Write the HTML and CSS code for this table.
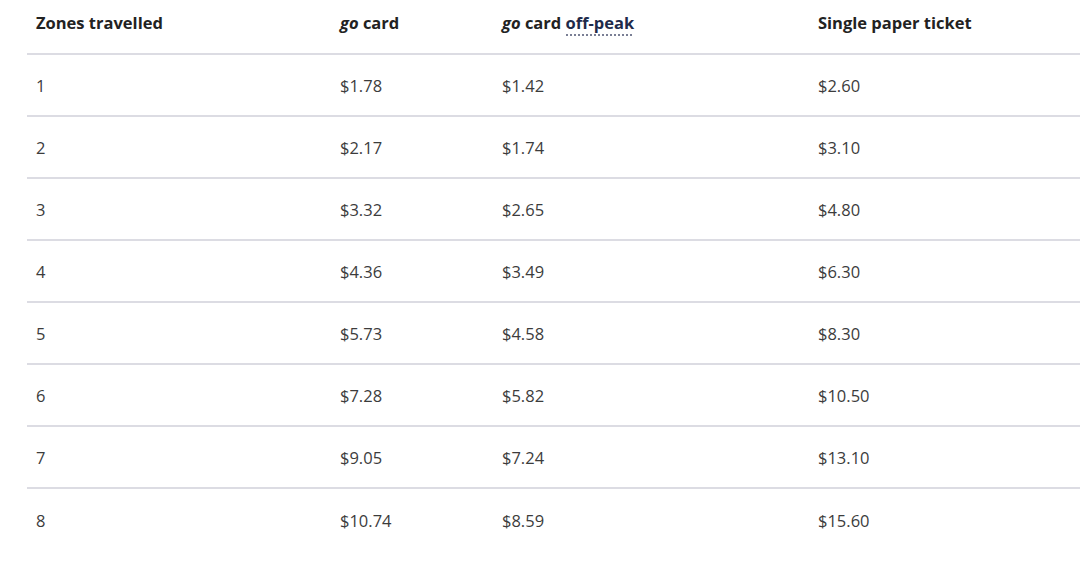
FILE: index.html
```html
<!DOCTYPE html>
<html lang="en">
<head>
<meta charset="utf-8">
<title>Fares</title>
<link rel="stylesheet" href="styles.css">
</head>
<body>
<table class="fares">
  <colgroup>
    <col class="c1"><col class="c2"><col class="c3"><col class="c4">
  </colgroup>
  <thead>
    <tr>
      <th>Zones travelled</th>
      <th><em>go</em> card</th>
      <th><em>go</em> card <abbr class="tip" title="off-peak">off-peak</abbr></th>
      <th>Single paper ticket</th>
    </tr>
  </thead>
  <tbody>
    <tr><td>1</td><td>$1.78</td><td>$1.42</td><td>$2.60</td></tr>
    <tr><td>2</td><td>$2.17</td><td>$1.74</td><td>$3.10</td></tr>
    <tr><td>3</td><td>$3.32</td><td>$2.65</td><td>$4.80</td></tr>
    <tr><td>4</td><td>$4.36</td><td>$3.49</td><td>$6.30</td></tr>
    <tr><td>5</td><td>$5.73</td><td>$4.58</td><td>$8.30</td></tr>
    <tr><td>6</td><td>$7.28</td><td>$5.82</td><td>$10.50</td></tr>
    <tr><td>7</td><td>$9.05</td><td>$7.24</td><td>$13.10</td></tr>
    <tr><td>8</td><td>$10.74</td><td>$8.59</td><td>$15.60</td></tr>
  </tbody>
</table>
</body>
</html>
```
FILE: styles.css
```css
html, body {
  margin: 0;
  padding: 0;
  background: #ffffff;
  overflow: hidden;
}
body {
  font-family: "Open Sans", "Liberation Sans", sans-serif;
  font-size: 16.5px;
  color: #3a3a3a;
}
.fares {
  margin-left: 27px;
  width: 1100px;
  border-collapse: separate;
  border-spacing: 0;
  table-layout: fixed;
}
.c1 { width: 304px; }
.c2 { width: 162px; }
.c3 { width: 316px; }
.c4 { width: 318px; }
.fares th {
  text-align: left;
  font-weight: 700;
  color: #222222;
  height: 55px;
  padding: 11px 9px 0;
  vertical-align: top;
  box-sizing: border-box;
  border-bottom: 2px solid #dcdce3;
  line-height: 24px;
}
.fares td {
  height: 62px;
  padding: 1px 9px 0;
  box-sizing: border-box;
  border-bottom: 2px solid #dcdce3;
  vertical-align: middle;
  line-height: 24px;
  color: #3c3c3c;
}
.fares tbody tr:last-child td {
  border-bottom: none;
}
.fares em {
  font-style: italic;
}
.tip {
  color: #1e2a4a;
  text-decoration: none;
  padding-bottom: 2px;
  background-image: repeating-linear-gradient(to right, #7a7f95 0 2px, transparent 2px 4px);
  background-size: 100% 2px;
  background-position: 0 100%;
  background-repeat: no-repeat;
  cursor: help;
}
```
